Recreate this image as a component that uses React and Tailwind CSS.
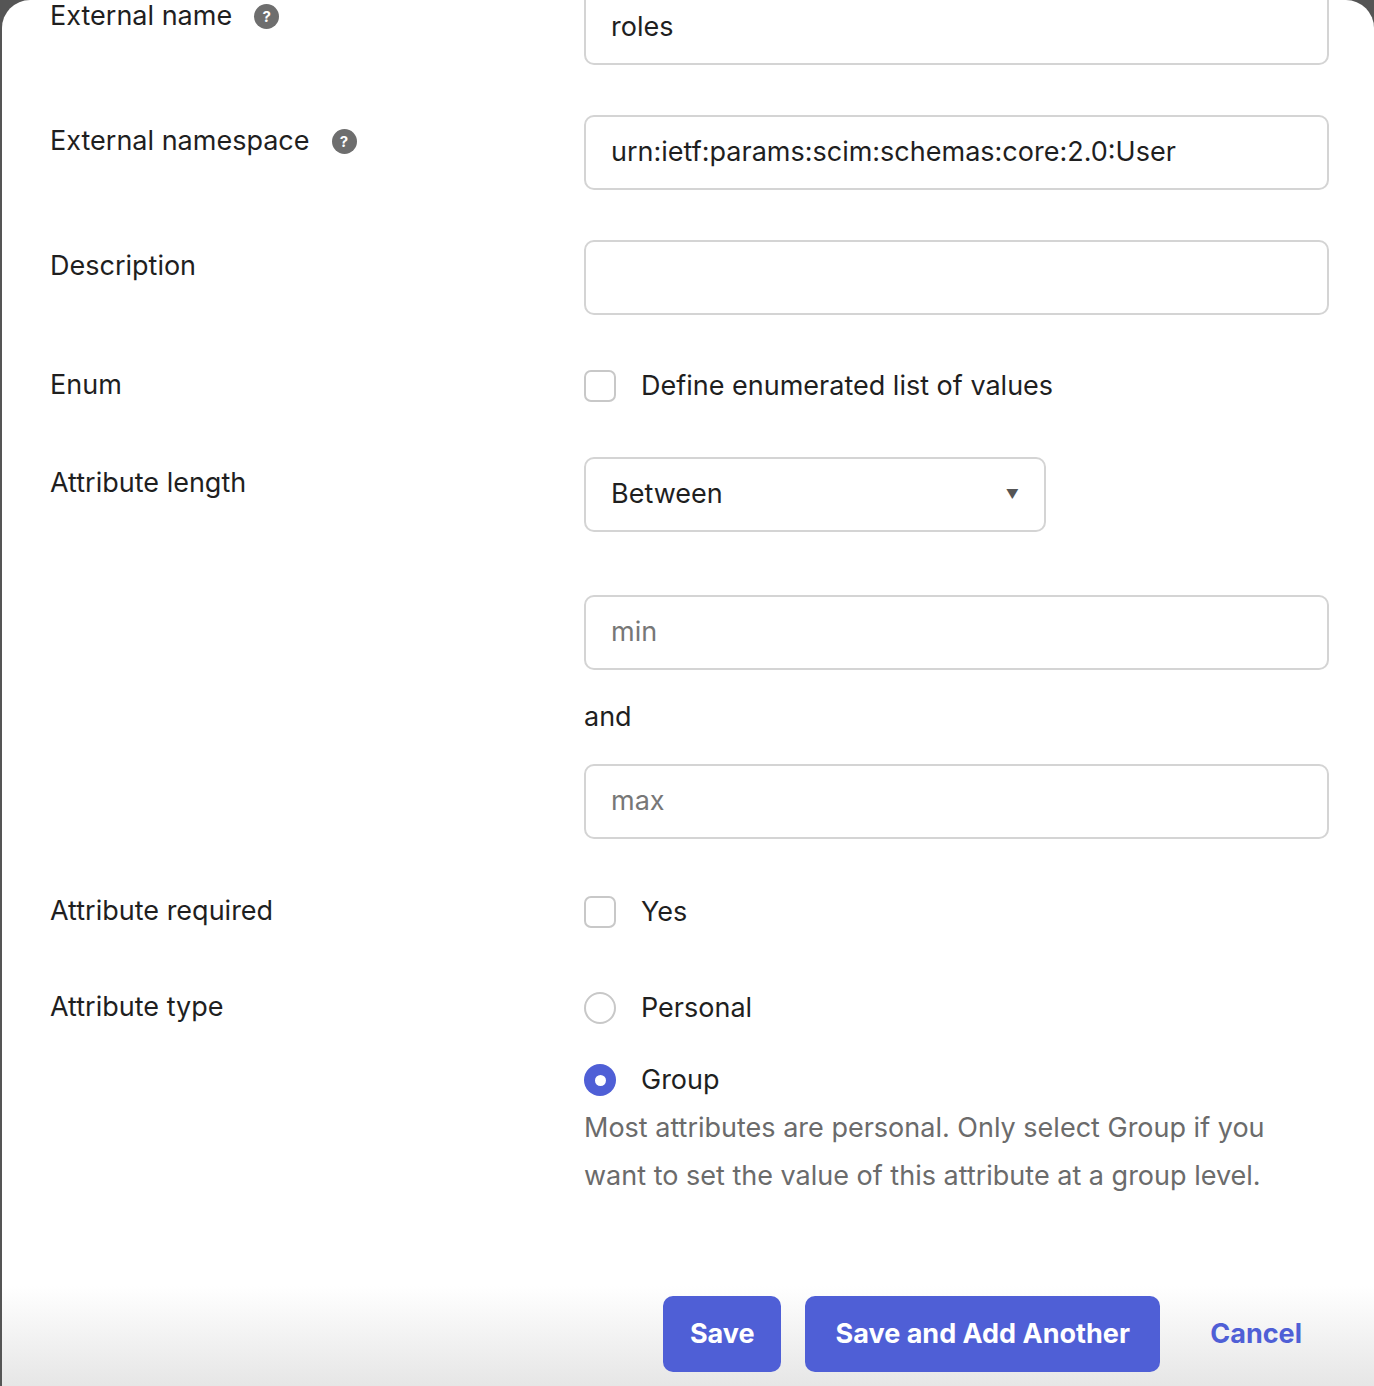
const Help = () => (
  <span className="inline-flex items-center justify-center w-[25px] h-[25px] rounded-full bg-[#6e6e6e] text-white text-[15px] font-bold ml-[22px] leading-none">?</span>
);
const Input = ({ value, placeholder, w = "w-[745px]" }) => (
  <div className={`${w} h-[75px] border-2 border-[#d4d4d4] rounded-[10px] flex items-center px-[25px] text-[27px] ${value ? "text-[#1f1f1f]" : "text-[#777]"}`}>
    {value || placeholder}
  </div>
);
const Box = () => <span className="w-[32px] h-[32px] border-2 border-[#c8c8c8] rounded-[7px] bg-white shrink-0" />;
const Row = ({ label, help, children, className = "" }) => (
  <div className={`flex ${className}`}>
    <div className="w-[534px] shrink-0 text-[27px] text-[#1f1f1f] flex items-start">
      <span className="flex items-center">{label}{help && <Help />}</span>
    </div>
    <div className="flex-1">{children}</div>
  </div>
);
export default function App() {
  return (
    <div className="w-[1374px] h-[1386px] bg-[#555] overflow-hidden" style={{ fontFamily: "Inter, 'Noto Sans', sans-serif" }}>
      <div className="ml-[2px] h-full bg-white rounded-t-[28px] relative overflow-hidden">
        <div className="pl-[48px] mt-[-10px]">
          <Row label="External name" help className="[&>div:first-child]:pt-[6px]"><Input value="roles" /></Row>
          <Row label="External namespace" help className="mt-[50px] [&>div:first-child]:pt-[6px]"><Input value="urn:ietf:params:scim:schemas:core:2.0:User" /></Row>
          <Row label="Description" className="mt-[50px] [&>div:first-child]:pt-[6px]"><Input value="" /></Row>
          <Row label="Enum" className="mt-[50px]">
            <div className="flex items-center gap-[25px] text-[27px] text-[#1f1f1f] h-[42px]"><Box />Define enumerated list of values</div>
          </Row>
          <Row label="Attribute length" className="mt-[50px] [&>div:first-child]:pt-[6px]">
            <div className="w-[462px] h-[75px] border-2 border-[#d4d4d4] rounded-[10px] flex items-center justify-between px-[25px] text-[27px] text-[#1f1f1f]">
              Between<span className="text-[13px] text-[#555]">▼</span>
            </div>
            <div className="mt-[63px]"><Input placeholder="min" /></div>
            <div className="h-[94px] flex items-center text-[27px] text-[#1f1f1f]">and</div>
            <Input placeholder="max" />
          </Row>
          <Row label="Attribute required" className="mt-[52px]">
            <div className="flex items-center gap-[25px] text-[27px] text-[#1f1f1f] h-[42px]"><Box />Yes</div>
          </Row>
          <Row label="Attribute type" className="mt-[54px]">
            <div className="flex items-center gap-[25px] text-[27px] text-[#1f1f1f] h-[42px]">
              <span className="w-[32px] h-[32px] rounded-full border-2 border-[#c8c8c8]" />Personal
            </div>
            <div className="flex items-center gap-[25px] text-[27px] text-[#1f1f1f] h-[42px] mt-[30px]">
              <span className="w-[32px] h-[32px] rounded-full bg-[#4f5fd6] flex items-center justify-center"><span className="w-[11px] h-[11px] rounded-full bg-white" /></span>Group
            </div>
            <p className="text-[27px] text-[#6b6b6b] leading-[48px] mt-[3px]">Most attributes are personal. Only select Group if you<br />want to set the value of this attribute at a group level.</p>
          </Row>
        </div>
        <div className="absolute left-0 right-0 bottom-0 h-[100px] bg-gradient-to-b from-white to-[#e6e6e6]" />
        <div className="absolute right-[72px] top-[1296px] flex items-center">
          <button className="h-[76px] w-[118px] rounded-[10px] bg-[#4f5fd6] text-white text-[27px] font-bold">Save</button>
          <button className="h-[76px] w-[355px] ml-[24px] rounded-[10px] bg-[#4f5fd6] text-white text-[27px] font-bold">Save and Add Another</button>
          <button className="ml-[50px] text-[#4f5fd6] text-[27px] font-bold">Cancel</button>
        </div>
      </div>
    </div>
  );
}
